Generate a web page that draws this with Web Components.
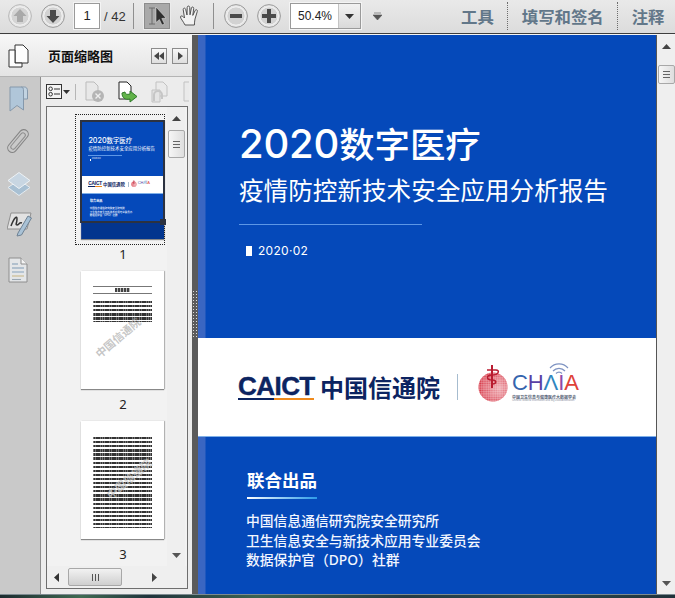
<!DOCTYPE html>
<html lang="zh">
<head>
<meta charset="utf-8">
<style>
  html, body { margin: 0; padding: 0; height: 100%; overflow: hidden; background: #e4e4e4; }
  body { font-family: "Noto Sans", "Noto Sans CJK SC", sans-serif; }
</style>
</head>
<body>
<reader-app></reader-app>

<script>
const CJK = '"Noto Sans CJK SC", "Noto Sans", sans-serif';

// every element here is just fixed markup in an open shadow root
class ShadowMarkup extends HTMLElement {
    constructor() {
        super();
        this.attachShadow({ mode: 'open' });
    }
    connectedCallback() {
        this.shadowRoot.innerHTML = this.render();
    }
}

class RoundButton extends ShadowMarkup {
    render() {
        const glyphs = {
            up: 'M12 5 L18.5 12 H15 V18 H9 V12 H5.5 Z',
            down: 'M12 19 L18.5 12 H15 V6 H9 V12 H5.5 Z',
            minus: 'M6 10 H18 V14 H6 Z',
            plus: 'M10 5 H14 V10 H19 V14 H14 V19 H10 V14 H5 V10 H10 Z'
        };
        const faded = this.hasAttribute('faded');
        const stroke = faded ? '#b8b8b8' : '#9a9a9a';
        const fill = faded ? '#a9a9a9' : '#4a4a4a';
        return `
            <style>:host { display: block; width: 24px; height: 24px; } svg { display: block; }</style>
            <svg width="24" height="24" viewBox="0 0 24 24">
                <circle cx="12" cy="12" r="11.4" fill="#e6e6e6" stroke="${stroke}" stroke-width="1"/>
                <circle cx="12" cy="12" r="9.2" fill="${faded ? '#d4d4d4' : '#d2d2d2'}" stroke="#f4f4f4" stroke-width="1"/>
                <path d="${glyphs[this.getAttribute('icon')]}" fill="${fill}"/>
            </svg>`;
    }
}

class ToolSeparator extends ShadowMarkup {
    render() {
        const dotted = this.hasAttribute('dotted');
        return `
            <style>
                :host { display: block; width: 1px; height: ${dotted ? 28 : 26}px; }
                div { height: 100%; ${dotted ? 'border-left: 1px dotted #6d6d6d;' : 'border-left: 1px solid #8f8f8f;'} }
            </style>
            <div></div>`;
    }
}

class ToolbarTab extends ShadowMarkup {
    render() {
        return `
            <style>
                :host {
                    display: block;
                    font: 700 16.4px/20px ${CJK};
                    color: #627789;
                    white-space: nowrap;
                }
            </style>
            <slot></slot>`;
    }
}

class ReaderToolbar extends ShadowMarkup {
    render() {
        return `
            <style>
                :host {
                    display: flex;
                    align-items: center;
                    height: 34px;
                    padding: 0 0 1px 8px;
                    box-sizing: border-box;
                    background: linear-gradient(#e9e9e9, #dcdcdc);
                    border-bottom: 1px solid #3d3d3d;
                    font-family: "Liberation Sans", sans-serif;
                    color: #222;
                }
                .field {
                    box-sizing: border-box;
                    height: 26px;
                    background: #fff;
                    border: 1px solid #9a9a9a;
                    box-shadow: 0 0 0 1px #f4f4f4;
                    font-size: 13px;
                    line-height: 24px;
                }
                .page { width: 26px; margin-left: 9px; text-align: center; }
                .count { margin-left: 4px; width: 28px; font-size: 13px; color: #333; }
                .select {
                    box-sizing: border-box;
                    width: 26px; height: 26px;
                    margin-left: 10px;
                    background: #a9a9a9;
                    border: 1px solid #8c8c8c;
                    box-shadow: 0 0 0 1px #ececec;
                }
                .zoom { display: flex; width: 71px; margin-left: 9px; font-size: 12px; }
                .zoom span { flex: 1; padding-left: 7px; }
                .zoom i {
                    width: 21px;
                    background: linear-gradient(#f2f2f2, #d9d9d9);
                    border-left: 1px solid #c4c4c4;
                    display: flex; align-items: center; justify-content: center;
                }
                svg { display: block; }
                .tabs { display: flex; align-items: center; margin-left: 79px; }
            </style>
            <round-button icon="up" faded></round-button>
            <round-button icon="down" style="margin-left:9px"></round-button>
            <div class="field page">1</div>
            <div class="count">/ 42</div>
            <tool-separator style="margin-left:1px"></tool-separator>
            <div class="select">
                <svg width="24" height="24" viewBox="0 0 24 24">
                    <path d="M4 4 H10 M7 4 V20 M4 20 H10" fill="none" stroke="#6d6d6d" stroke-width="1"/>
                    <path d="M11 3 L21 14 L16.8 14.5 L19.5 20 L17 21 L14.4 15.5 L11 18.5 Z" fill="#2f2f2f" stroke="#e8e8e8" stroke-width=".5"/>
                </svg>
            </div>
            <svg style="margin-left:8px" width="24" height="24" viewBox="0 0 24 24">
                <path d="M7 21 C5 17 2.5 14.5 2.5 13 C2.5 11.5 4.5 11.5 6.5 14 L5.2 5.6 C5 3.8 7.2 3.6 7.7 5.4 L9 11 L9.2 3.4 C9.3 1.6 11.6 1.6 11.7 3.4 L12 10.8 L13.4 4 C13.8 2.4 15.9 2.8 15.7 4.6 L14.8 11.4 L17.2 6.4 C18 5 19.8 5.8 19.3 7.4 L17 15 C16.4 17.4 16.6 19 16.4 21 Z" fill="#f2f2f2" stroke="#444" stroke-width=".9"/>
            </svg>
            <tool-separator style="margin-left:11px"></tool-separator>
            <round-button icon="minus" style="margin-left:10px"></round-button>
            <round-button icon="plus" style="margin-left:9px"></round-button>
            <div class="field zoom" style="margin-left:9px"><span>50.4%</span><i>
                <svg width="9" height="5"><path d="M0 0 H9 L4.5 5 Z" fill="#333"/></svg>
            </i></div>
            <svg style="margin-left:12px" width="9" height="9"><path d="M1 1 H8 M0 3 H9 L4.5 8 Z" fill="#555" stroke="#555" stroke-width=".6"/></svg>
            <div class="tabs">
                <toolbar-tab>工具</toolbar-tab>
                <tool-separator dotted style="margin-left:13px"></tool-separator>
                <toolbar-tab style="margin-left:14px">填写和签名</toolbar-tab>
                <tool-separator dotted style="margin-left:13px"></tool-separator>
                <toolbar-tab style="margin-left:14px">注释</toolbar-tab>
            </div>`;
    }
}

class IconRail extends ShadowMarkup {
    render() {
        return `
            <style>
                :host {
                    display: flex;
                    flex-direction: column;
                    width: 41px;
                    padding: 9px 0 0 7px;
                    box-sizing: border-box;
                    background: #c9c9c9;
                    border-right: 1px solid #8e8e8e;
                }
                svg { display: block; }
            </style>
            <svg style="margin-left:2px" width="19" height="26" viewBox="0 0 19 26">
                <path d="M12 1 H15.5 C17.5 1 18.5 2.5 18.5 5 V13 H14.5" fill="#c2d3e1" stroke="#8598ab"/>
                <path d="M1 1 H12 C14 1 14.5 2.5 14.5 5 V24 L8 19.5 L1 25 Z" fill="#b0c6d9" stroke="#8598ab"/>
            </svg>
            <svg style="margin-top:17px" width="22" height="24" viewBox="0 0 22 24">
                <g transform="rotate(40 11 12)" fill="none">
                    <rect x="6.5" y="-1.5" width="9" height="27" rx="4.5" stroke="#858585" stroke-width="1.1"/>
                    <rect x="8.8" y="2" width="4.6" height="20" rx="2.3" stroke="#8f8f8f" stroke-width="1"/>
                </g>
            </svg>
            <svg style="margin-top:18px" width="24" height="26" viewBox="0 0 24 26">
                <path d="M12 9 L23 16.5 L12 24.5 L1 16.5 Z" fill="#a8c0d3" stroke="#e4ebf0"/>
                <path d="M12 1.5 L23 9.5 L12 17.5 L1 9.5 Z" fill="#c8d6e2" stroke="#eef2f5"/>
            </svg>
            <svg style="margin-top:13px" width="25" height="27" viewBox="0 0 25 27">
                <path d="M4 3 H24 L20 19 H0 Z" fill="#e2e2e2" stroke="#8f8f8f"/>
                <path d="M4 16 C7 8 10 5 10 9 C10 13 8 15 10 15 C12 15 12 12 15 13" fill="none" stroke="#333" stroke-width="1.5"/>
                <path d="M11 23 L21 6 L24.5 8 L14.5 25 L10 26 Z" fill="#a9c2d6" stroke="#6f8294"/>
            </svg>
            <svg style="margin-top:20px;margin-left:1px" width="20" height="26" viewBox="0 0 20 26">
                <path d="M1 1 H13 L19 7 V25 H1 Z" fill="#e4e6e8" stroke="#8e8e8e"/>
                <path d="M13 1 V7 H19" fill="#f4f4f4" stroke="#8e8e8e"/>
                <path d="M4 7 H10 M4 11 H16" stroke="#7f99b3" stroke-width="1.1"/>
                <path d="M4 15 H16" stroke="#8fa8bf" stroke-width="1.1"/>
                <path d="M4 19 H16" stroke="#c8b98a" stroke-width="1.1"/>
                <path d="M4 22.5 H13" stroke="#9aa7b2" stroke-width="1.1"/>
            </svg>`;
    }
}

class ScrollBar extends ShadowMarkup {
    render() {
        const top = this.getAttribute('thumb-top');
        const height = this.getAttribute('thumb-height');
        const lines = this.getAttribute('lines');
        return `
            <style>
                :host {
                    display: flex;
                    flex-direction: column;
                    align-items: center;
                    box-sizing: border-box;
                    background: #efefef;
                }
                .arrow { flex: none; height: 22px; display: flex; align-items: center; justify-content: center; }
                .thumb {
                    box-sizing: border-box;
                    align-self: stretch;
                    margin: ${top}px 0 0 1px;
                    height: ${height}px;
                    background: linear-gradient(90deg, #f6f6f6, #dedede);
                    border: 1px solid #a8a8a8;
                    border-radius: 2px;
                    display: flex; flex-direction: column; align-items: center; justify-content: center; gap: 2px;
                }
                .thumb b { width: 7px; height: 1px; background: #666; }
                .fill { flex: 1; }
                svg { display: block; }
            </style>
            <div class="arrow"><svg width="9" height="5"><path d="M4.5 0 L9 5 H0 Z" fill="#444"/></svg></div>
            <div class="thumb">${'<b></b>'.repeat(lines)}</div>
            <div class="fill"></div>
            <div class="arrow"><svg width="9" height="5"><path d="M0 0 H9 L4.5 5 Z" fill="#555"/></svg></div>`;
    }
}

class HorizontalBar extends ShadowMarkup {
    render() {
        return `
            <style>
                :host {
                    display: flex;
                    align-items: center;
                    height: 22px;
                    background: #efefef;
                }
                .left { margin-left: 7px; }
                .thumb {
                    box-sizing: border-box;
                    width: 54px; height: 18px;
                    margin-left: 9px;
                    background: linear-gradient(#f2f2f2, #cfcfcf);
                    border: 1px solid #a8a8a8;
                    border-radius: 2px;
                    display: flex; align-items: center; justify-content: center; gap: 2px;
                }
                .thumb b { width: 1px; height: 7px; background: #555; }
                .right { margin-left: 30px; }
                svg { display: block; }
            </style>
            <svg class="left" width="5" height="9"><path d="M5 0 V9 L0 4.5 Z" fill="#333"/></svg>
            <div class="thumb"><b></b><b></b><b></b></div>
            <svg class="right" width="5" height="9"><path d="M0 0 V9 L5 4.5 Z" fill="#444"/></svg>`;
    }
}

class ThumbCard extends ShadowMarkup {
    render() {
        const selected = this.hasAttribute('selected');
        return `
            <style>
                :host { display: block; width: 90px; position: relative; }
                .page {
                    width: 83px; height: 118px;
                    margin-left: 6px;
                    background: #fff;
                    box-shadow: 0 1px 1px #888, 1px 0 1px #bbb;
                    overflow: hidden;
                    position: relative;
                }
                .label {
                    margin-left: 6px;
                    width: 84px;
                    height: 30px;
                    font: 13px/30px "Noto Sans", sans-serif;
                    text-align: center;
                    color: #222;
                }
                .dotted { position: absolute; left: 0; top: -7px; width: 90px; height: 131px; box-sizing: border-box; border: 1px dotted #222; }
                .view { position: absolute; left: 5px; top: -1px; width: 85px; height: 103px; box-sizing: border-box; border: 2px solid #2c3240; }
                .handle { position: absolute; left: 85px; top: 98px; width: 6px; height: 6px; background: #2c3240; }
                .dim { position: absolute; left: 0; right: 0; top: 102px; bottom: 0; background: rgba(0, 20, 70, .38); }
            </style>
            <div class="page"><slot></slot>${selected ? '<div class="dim"></div>' : ''}</div>
            ${selected ? '<div class="dotted"></div><div class="view"></div><div class="handle"></div>' : ''}
            <div class="label">${this.getAttribute('label')}</div>`;
    }
}

class MiniText extends ShadowMarkup {
    render() {
        return `
            <style>
                :host { display: block; height: 100%; box-sizing: border-box; padding: 0 12px 0 12px; position: relative; }
                .rule { height: 1px; background: #777; }
                .head {
                    height: 4px;
                    margin: 1px 22px;
                    background: repeating-linear-gradient(90deg, #444 0 2px, #bbb 2px 3px);
                }
                .block {
                    background:
                        repeating-linear-gradient(90deg, rgba(255,255,255,.32) 0 .7px, transparent .7px 2.3px),
                        repeating-linear-gradient(#333 0 2.2px, #fff 2.2px 4.1px);
                }
                .mark {
                    position: absolute;
                    font: 700 11px/14px ${CJK};
                    color: rgba(160, 160, 160, .6);
                    transform: rotate(-40deg);
                    white-space: nowrap;
                }
            </style>
            ${this.getAttribute('kind') === 'foreword' ? `
                <div style="height:15px"></div>
                <div class="rule"></div>
                <div class="head"></div>
                <div class="rule"></div>
                <div class="block" style="height:20.5px;margin-top:7px"></div>
                <div class="mark" style="left:9px;top:59px">中国信通院</div>
            ` : `
                <div style="height:11px"></div>
                <div class="head" style="margin:0 32px"></div>
                <div class="block" style="height:91px;margin-top:1px"></div>
                <div class="mark" style="left:20px;top:50px;color:rgba(200,200,200,.72)">中国信通院</div>
            `}`;
    }
}

class ThumbPanel extends ShadowMarkup {
    render() {
        return `
            <style>
                :host {
                    display: flex;
                    flex-direction: column;
                    flex: 1;
                    min-width: 0;
                    background: #ececec;
                }
                .tools { flex: none; height: 29px; display: flex; align-items: center; padding-left: 5px; box-sizing: border-box; }
                .tools svg { display: block; }
                .sep { width: 1px; height: 16px; background: #b6b6b6; margin-left: 5px; }
                .box {
                    flex: 1;
                    margin: 0 4px 5px 5px;
                    border: 1px solid #6e6e6e;
                    display: flex;
                    flex-direction: column;
                    min-height: 0;
                    background: #f2f2f2;
                }
                .row { flex: 1; display: flex; min-height: 0; }
                .list { flex: 1; min-width: 0; overflow: hidden; padding: 14px 0 0 28px; display: flex; flex-direction: column; gap: 2px; }
                scroll-bar { width: 18px; margin-right: 2px; }
            </style>
            <div class="tools">
                <svg width="24" height="16" viewBox="0 0 24 16">
                    <rect x=".5" y=".5" width="15" height="14" fill="#f4f4f4" stroke="#333"/>
                    <circle cx="4.6" cy="4.8" r="1.8" fill="none" stroke="#333"/>
                    <circle cx="4.6" cy="10.2" r="1.8" fill="none" stroke="#333"/>
                    <path d="M8 5 H14 M8 10 H14" stroke="#333"/>
                    <path d="M17 6 H24 L20.5 10 Z" fill="#333"/>
                </svg>
                <div class="sep"></div>
                <svg style="margin-left:8px" width="21" height="22" viewBox="0 0 21 22">
                    <path d="M2 1 H10 L14 5 V19 H2 Z" fill="#e8e8e8" stroke="#bbb"/>
                    <circle cx="14" cy="15" r="6" fill="#b5b5b5"/>
                    <path d="M11.5 12.5 L16.5 17.5 M16.5 12.5 L11.5 17.5" stroke="#eee" stroke-width="1.4"/>
                </svg>
                <svg style="margin-left:12px" width="21" height="22" viewBox="0 0 21 22">
                    <path d="M2 1 H10 L14 5 V18 H2 Z" fill="#fff" stroke="#222"/>
                    <path d="M5 12 C5 17 8 19 13 18 V21 L20 15.5 L13 10 V13 C10 14 8 13 8 11 Z" fill="#62b34a" stroke="#2f7a2a"/>
                </svg>
                <svg style="margin-left:12px" width="19" height="22" viewBox="0 0 19 22">
                    <path d="M6 1 H13 L17 5 V15 H6 Z" fill="#eaeaea" stroke="#c2c2c2"/>
                    <path d="M2 9 H10 V21 H2 Z" fill="#e4e4e4" stroke="#c2c2c2"/>
                    <path d="M4 20 V14 A4 4 0 0 1 12 14 V18" fill="none" stroke="#c6c6c6" stroke-width="2"/>
                </svg>
                <svg style="margin-left:14px" width="6" height="22" viewBox="0 0 6 22">
                    <path d="M6 1 H1 V20 H6" fill="#eaeaea" stroke="#c2c2c2"/>
                </svg>
            </div>
            <div class="box">
                <div class="row">
                    <div class="list"><slot></slot></div>
                    <scroll-bar thumb-top="1" thumb-height="28" lines="3"></scroll-bar>
                </div>
                <horizontal-bar></horizontal-bar>
            </div>`;
    }
}

class NavPanel extends ShadowMarkup {
    render() {
        return `
            <style>
                :host {
                    display: flex;
                    flex-direction: column;
                    width: 192px;
                    flex: none;
                    background: #ececec;
                }
                header {
                    flex: none;
                    height: 42px;
                    box-sizing: border-box;
                    display: flex;
                    align-items: center;
                    background: linear-gradient(#f7f7f7, #e4e4e4);
                    border-bottom: 1px solid #b4b4b4;
                }
                h2 {
                    margin: 0 0 0 19px;
                    width: 103px;
                    font: 700 13px/18px ${CJK};
                    color: #111;
                }
                .nav {
                    box-sizing: border-box;
                    width: 16px; height: 16px;
                    background: linear-gradient(#f8f8f8, #dedede);
                    border: 1px solid #8c8c8c;
                    display: flex; align-items: center; justify-content: center;
                }
                svg { display: block; }
                .body { flex: 1; display: flex; min-height: 0; }
            </style>
            <header>
                <svg style="margin-left:8px" width="21" height="24" viewBox="0 0 21 24">
                    <path d="M7 1 H15 L20 6 V19 H7 Z" fill="#fdfdfd" stroke="#333"/>
                    <path d="M1 6 H7 V19 H14 V23 H1 Z" fill="#fdfdfd" stroke="#333"/>
                </svg>
                <h2>页面缩略图</h2>
                <div class="nav"><svg width="10" height="8"><path d="M5 0 V8 L0 4 Z M10 0 V8 L5 4 Z" fill="#444"/></svg></div>
                <div class="nav" style="margin-left:5px"><svg width="5" height="8"><path d="M0 0 V8 L5 4 Z" fill="#444"/></svg></div>
            </header>
            <div class="body">
                <icon-rail></icon-rail>
                <thumb-panel>
                    <thumb-card label="1" selected><cover-page mini style="zoom:.1812"></cover-page></thumb-card>
                    <thumb-card label="2"><mini-text kind="foreword"></mini-text></thumb-card>
                    <thumb-card label="3"><mini-text kind="summary"></mini-text></thumb-card>
                </thumb-panel>
            </div>`;
    }
}

class ChmiaLogo extends ShadowMarkup {
    render() {
        // the fine print has no size left at thumbnail scale
        const fine = this.hasAttribute('mini') ? '' : `
                <div class="cn">中国卫生信息与健康医疗大数据学会</div>
                <div class="en">Chinese Medical Information and Big Data Association</div>`;
        return `
            <style>
                :host { display: flex; align-items: flex-start; flex: none; }
                svg { display: block; flex: none; }
                .word {
                    position: relative;
                    width: 72px;
                    margin-left: 1px;
                    padding-top: 6px;
                }
                .letters { font: 400 22px/25px "Liberation Sans", sans-serif; white-space: nowrap; letter-spacing: -.1px; }
                .letters span:nth-child(1) { color: #3565ae; }
                .letters span:nth-child(2) { color: #5a3fa5; }
                .letters span:nth-child(3) { color: #2f86bf; }
                .letters span:nth-child(4) { color: #8d4aa8; }
                .letters span:nth-child(5) { color: #df4238; }
                .wifi { position: absolute; left: 36px; top: -1px; }
                .cn { font: 700 4px/4px ${CJK}; color: #555f75; white-space: nowrap; }
                .en { font: 2.6px/3px "Liberation Sans", sans-serif; color: #8a90a0; white-space: nowrap; }
            </style>
            <svg width="34" height="40" viewBox="0 0 34 40">
                <defs>
                    <pattern id="dots" width="2.3" height="2.3" patternUnits="userSpaceOnUse">
                        <circle cx="1.15" cy="1.15" r=".85" fill="#d3293a"/>
                    </pattern>
                    <radialGradient id="fade" cx=".7" cy=".55" r=".75">
                        <stop offset="0" stop-color="#fff" stop-opacity=".55"/>
                        <stop offset="1" stop-color="#fff" stop-opacity="0"/>
                    </radialGradient>
                </defs>
                <circle cx="16" cy="23" r="14.5" fill="#e6808a"/>
                <circle cx="16" cy="23" r="14.5" fill="url(#dots)"/>
                <circle cx="16" cy="23" r="14.5" fill="url(#fade)"/>
                <path d="M15 1 V24" stroke="#b91c30" stroke-width="2"/>
                <path d="M10 6 H19 C23 6 22 11 15 11 C9 11 9 16 15 16 C20 16 20 20 15 20" fill="none" stroke="#b91c30" stroke-width="1.5"/>
            </svg>
            <div class="word">
                <svg class="wifi" width="22" height="12" viewBox="0 0 22 12">
                    <path d="M2 5 A12 12 0 0 1 20 5 M5 8 A8 8 0 0 1 17 8 M8 10.5 A4 4 0 0 1 14 10.5" fill="none" stroke="#7e93c2" stroke-width="1.2"/>
                </svg>
                <div class="letters"><span>C</span><span>H</span><span>Λ</span><span>I</span><span>A</span></div>${fine}
            </div>`;
    }
}

class CoverPage extends ShadowMarkup {
    render() {
        const blue = 'linear-gradient(90deg, #3a66c2 0, #3a66c2 7px, #0549ba 8px)';
        return `
            <style>
                :host {
                    display: block;
                    width: 458px;
                    height: 651px;
                    flex: none;
                    overflow: hidden;
                    background: #0549ba;
                    color: #fff;
                    font-family: ${CJK};
                }
                .top { height: 303px; box-sizing: border-box; padding: 87px 0 0 41px; background: ${blue}; }
                h1 { margin: 0; font: 500 35.4px/42px ${CJK}; white-space: nowrap; }
                h1 b { font: 500 40px/42px Inter, sans-serif; letter-spacing: -.2px; }
                h2 { margin: 9px 0 0; font: 400 24.6px/30px ${CJK}; white-space: nowrap; }
                .rule { width: 183px; height: 1px; margin-top: 20px; background: #5d97e6; }
                .date { display: flex; align-items: center; margin: 18px 0 0 7px; height: 16px; font: 12px/16px Inter, sans-serif; letter-spacing: .3px; }
                .date i { width: 6px; height: 10px; margin-right: 6px; background: #fff; }
                .band {
                    height: 99px;
                    box-sizing: border-box;
                    background: #fff;
                    display: flex;
                    align-items: center;
                    padding: 0 0 0 40px;
                    border-bottom: 1px solid #7fb0e8;
                }
                .caict { flex: none; width: 76px; color: #0c2461; margin-top: 2px; }
                .caict b { display: block; font: 700 26px/20px "Liberation Sans", sans-serif; letter-spacing: -.55px; white-space: nowrap; -webkit-text-stroke: .4px #0c2461; }
                .caict i { display: block; height: 2.5px; margin-top: 2px; background: linear-gradient(90deg, #0c2461 0 48%, #f08a1c 48%); }
                .cn { flex: none; margin-left: 6px; font: 700 24px/28px ${CJK}; color: #0c2461; white-space: nowrap; }
                .bar { flex: none; width: 1px; height: 26px; margin: 0 19px 0 17px; background: #a6bccf; }
                chmia-logo { margin-top: -6px; }
                .bottom { height: 249px; box-sizing: border-box; padding: 31px 0 0 49px; background: ${blue}; }
                h3 { margin: 0; font: 700 17.5px/24px ${CJK}; white-space: nowrap; }
                .under { width: 70px; height: 2px; margin-top: 5px; background: linear-gradient(90deg, #fff, #2d9be8); }
                .lines { margin: 12px 0 0 -1px; font: 500 13.8px/19.6px ${CJK}; white-space: nowrap; color: #f2f6ff; }
                .lines span { font-family: "Noto Sans", sans-serif; }
            </style>
            <div class="top">
                <h1><b>2020</b>数字医疗</h1>
                <h2>疫情防控新技术安全应用分析报告</h2>
                <div class="rule"></div>
                <div class="date"><i></i>2020·02</div>
            </div>
            <div class="band">
                <div class="caict"><b>CAICT</b><i></i></div>
                <div class="cn">中国信通院</div>
                <div class="bar"></div>
                <chmia-logo ${this.hasAttribute('mini') ? 'mini' : ''}></chmia-logo>
            </div>
            <div class="bottom">
                <h3>联合出品</h3>
                <div class="under"></div>
                <div class="lines">
                    中国信息通信研究院安全研究所<br>
                    卫生信息安全与新技术应用专业委员会<br>
                    数据保护官（<span>DPO</span>）社群
                </div>
            </div>`;
    }
}

class ReaderApp extends ShadowMarkup {
    render() {
        return `
            <style>
                :host { display: flex; flex-direction: column; width: 675px; height: 598px; overflow: hidden; }
                .main { flex: 1; display: flex; min-height: 0; border-top: 1px solid #f4f4f4; }
                .split {
                    flex: none; width: 6px;
                    background: #5b5b5b;
                    display: flex; align-items: center; justify-content: center;
                }
                .split i {
                    width: 4px; height: 48px;
                    background: repeating-linear-gradient(#dcdcdc 0 1px, transparent 1px 3px);
                    -webkit-mask-image: repeating-linear-gradient(90deg, #000 0 1px, transparent 1px 3px);
                    mask-image: repeating-linear-gradient(90deg, #000 0 1px, transparent 1px 3px);
                }
                .view { flex: 1; min-width: 0; overflow: hidden; }
                scroll-bar { flex: none; width: 19px; border-left: 1px solid #555; }
                .taskbar {
                    flex: none; height: 4px;
                    background: linear-gradient(90deg, #1c2b2f, #3f6a52 12%, #20343c 22%, #3b6250 38%, #243a44 60%, #2a4a50 80%, #20323a);
                    border-top: 1px solid #7d8a90;
                    box-sizing: border-box;
                }
            </style>
            <reader-toolbar></reader-toolbar>
            <div class="main">
                <nav-panel></nav-panel>
                <div class="split"><i></i></div>
                <div class="view"><cover-page></cover-page></div>
                <scroll-bar thumb-top="8" thumb-height="19" lines="3"></scroll-bar>
            </div>
            <div class="taskbar"></div>`;
    }
}

customElements.define('round-button', RoundButton);
customElements.define('tool-separator', ToolSeparator);
customElements.define('toolbar-tab', ToolbarTab);
customElements.define('reader-toolbar', ReaderToolbar);
customElements.define('icon-rail', IconRail);
customElements.define('scroll-bar', ScrollBar);
customElements.define('horizontal-bar', HorizontalBar);
customElements.define('thumb-card', ThumbCard);
customElements.define('mini-text', MiniText);
customElements.define('thumb-panel', ThumbPanel);
customElements.define('nav-panel', NavPanel);
customElements.define('chmia-logo', ChmiaLogo);
customElements.define('cover-page', CoverPage);
customElements.define('reader-app', ReaderApp);
</script>
</body>
</html>
